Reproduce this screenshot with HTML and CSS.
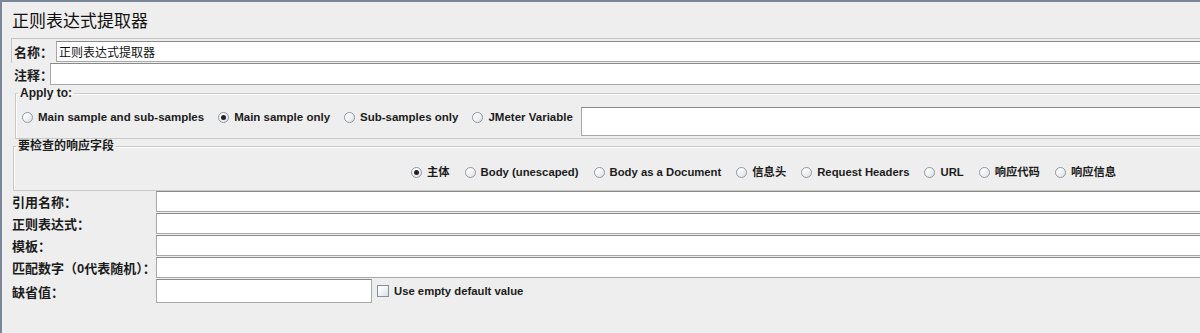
FILE: index.html
```html
<!DOCTYPE html>
<html lang="zh-CN">
<head>
    <meta charset="UTF-8">
    <meta name="viewport" content="width=device-width, initial-scale=1.0">
    <title>正则表达式提取器</title>
    <link rel="stylesheet" href="styles.css">
</head>
<body>
    <div class="frame">
        <h1 class="title">正则表达式提取器</h1>

        <div class="name-box">
            <span class="label name-label">名称：</span>
            <input class="field plain" type="text" value="正则表达式提取器">
        </div>
        <div class="comment-row">
            <span class="label comment-label">注释：</span>
            <input class="field" type="text">
        </div>

        <fieldset class="group apply-group">
            <legend>Apply to:</legend>
            <div class="radios">
                <span class="radio"><i class="dot"></i>Main sample and sub-samples</span>
                <span class="radio"><i class="dot on"></i>Main sample only</span>
                <span class="radio"><i class="dot"></i>Sub-samples only</span>
                <span class="radio"><i class="dot"></i>JMeter Variable</span>
                <input class="field var-field" type="text">
            </div>
        </fieldset>

        <fieldset class="group check-group">
            <legend>要检查的响应字段</legend>
            <div class="radios check-radios">
                <span class="radio"><i class="dot on"></i>主体</span>
                <span class="radio"><i class="dot"></i>Body (unescaped)</span>
                <span class="radio"><i class="dot"></i>Body as a Document</span>
                <span class="radio"><i class="dot"></i>信息头</span>
                <span class="radio"><i class="dot"></i>Request Headers</span>
                <span class="radio"><i class="dot"></i>URL</span>
                <span class="radio"><i class="dot"></i>响应代码</span>
                <span class="radio"><i class="dot"></i>响应信息</span>
            </div>
        </fieldset>

        <div class="form-grid">
            <span class="label">引用名称：</span>
            <input class="field" type="text">
            <span class="label">正则表达式：</span>
            <input class="field" type="text">
            <span class="label">模板：</span>
            <input class="field" type="text">
            <span class="label">匹配数字（0代表随机）：</span>
            <input class="field" type="text">
            <span class="label">缺省值：</span>
            <div class="default-row">
                <input class="field short-field" type="text">
                <span class="checkbox"><i class="box"></i>Use empty default value</span>
            </div>
        </div>
    </div>
</body>
</html>
```

FILE: styles.css
```css
html, body {
    margin: 0;
    padding: 0;
    overflow: hidden;
}
body {
    background-color: #eeeeee;
    color: #1c1c1c;
    font-family: "Liberation Sans", "Noto Sans CJK SC", sans-serif;
    font-size: 11.5px;
    font-weight: bold;
}
.frame {
    width: 1230px;
    height: 331px;
    border-top: 2px solid #7b8798;
    border-left: 2px solid #7b8798;
    background-color: #eeeeee;
}
.title {
    margin: 0;
    height: 36px;
    padding-left: 10px;
    font-size: 17px;
    font-weight: normal;
    line-height: 40px;
    color: #111111;
}
.label {
    font-size: 13px;
    font-weight: bold;
    white-space: nowrap;
}
.field {
    box-sizing: border-box;
    height: 20px;
    margin: 0;
    padding: 0 2px;
    border: 1px solid #a8a8a8;
    border-top-color: #8a8a8a;
    background-color: #ffffff;
    font-family: "Liberation Sans", "Noto Sans CJK SC", sans-serif;
    font-size: 12px;
    font-weight: normal;
    color: #111111;
    outline: none;
}
.name-box {
    display: flex;
    align-items: center;
    height: 23px;
    margin-left: 9px;
    padding-top: 1px;
    border: 1px solid #c4c4c4;
    border-right: none;
    border-bottom: none;
}
.name-label {
    width: 42px;
    padding-left: 2px;
}
.name-box .field {
    flex: 1;
    height: 21px;
}
.comment-row {
    display: flex;
    align-items: center;
    height: 22px;
    padding-left: 12px;
}
.comment-label {
    width: 36px;
}
.comment-row .field {
    flex: 1;
    height: 22px;
}
.group {
    margin: 0;
    padding: 0;
    border: 1px solid #c9c9c9;
    border-right: none;
    box-shadow: inset 1px 1px 0 #ffffff;
}
.group legend {
    padding: 0 2px;
    margin-left: 2px;
    font-size: 12px;
    font-weight: bold;
    line-height: 14px;
}
.radios {
    display: flex;
    align-items: center;
    gap: 14px;
}
.radio,
.checkbox {
    display: inline-flex;
    align-items: center;
    gap: 5px;
    line-height: 14px;
    white-space: nowrap;
}
.apply-group {
    margin: 1px 0 0 13px;
    padding: 7px 0 2px 0;
}
.apply-group .radios {
    align-items: flex-start;
    padding-left: 6px;
}
.apply-group .radio {
    margin-top: 3px;
}
.check-group {
    margin: 0 0 0 11px;
    padding: 12px 0 11px 0;
}
.check-radios {
    gap: 15px;
    padding-left: 397px;
}
.dot {
    position: relative;
    box-sizing: border-box;
    width: 11px;
    height: 11px;
    border: 1px solid #8d98a4;
    border-radius: 50%;
    background: linear-gradient(135deg, #ffffff 20%, #dfe3e8 90%);
}
.dot.on::after {
    content: "";
    position: absolute;
    left: 2px;
    top: 2px;
    width: 5px;
    height: 5px;
    border-radius: 50%;
    background-color: #222222;
}
.var-field {
    flex: 1;
    height: 29px;
    margin-left: -6px;
}
.check-radios .radio {
    font-size: 11.3px;
}
.form-grid {
    display: grid;
    grid-template-columns: 144px 1fr;
    row-gap: 1px;
    align-items: center;
    padding-left: 10px;
}
.form-grid > .field {
    height: 21px;
}
.default-row {
    display: flex;
    align-items: center;
    gap: 5px;
}
.short-field {
    width: 216px;
    height: 24px;
}
.checkbox {
    font-size: 11.3px;
}
.box {
    box-sizing: border-box;
    width: 12px;
    height: 12px;
    border: 1px solid #8290a0;
    background: linear-gradient(135deg, #ffffff 20%, #dde3ea 90%);
}
```
